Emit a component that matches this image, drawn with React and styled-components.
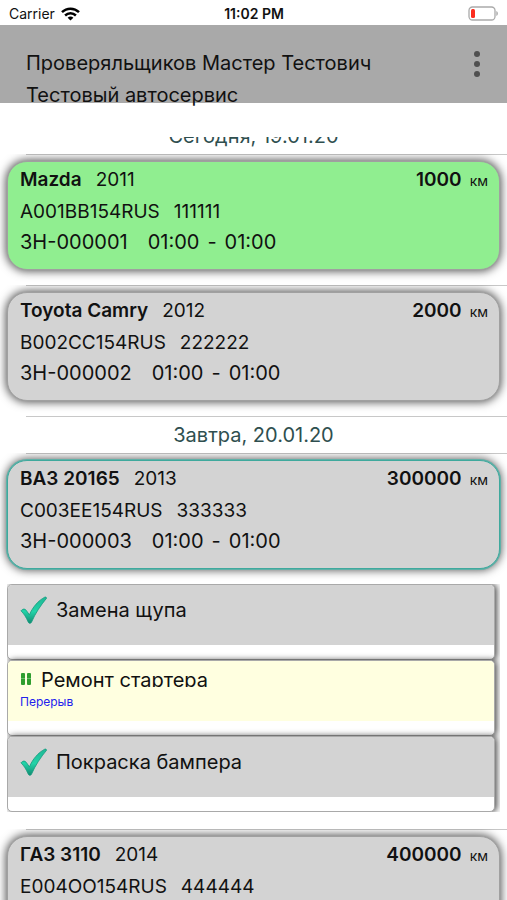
import React from 'react';
import styled, { createGlobalStyle } from 'styled-components';

const DAYS = [
    {
        title: 'Сегодня, 19.01.20',
        scrolled: true,
        orders: [
            { id: 1, car: 'Mazda', year: '2011', mileage: '1000', plate: 'A001BB154RUS', code: '111111', number: 'ЗН-000001', from: '01:00', to: '01:00', active: true },
            { id: 2, car: 'Toyota Camry', year: '2012', mileage: '2000', plate: 'B002CC154RUS', code: '222222', number: 'ЗН-000002', from: '01:00', to: '01:00' },
        ],
    },
    {
        title: 'Завтра, 20.01.20',
        orders: [
            {
                id: 3, car: 'ВАЗ 20165', year: '2013', mileage: '300000', plate: 'C003EE154RUS', code: '333333', number: 'ЗН-000003', from: '01:00', to: '01:00', selected: true,
                tasks: [
                    { name: 'Замена щупа', status: 'done' },
                    { name: 'Ремонт стартера', status: 'paused', note: 'Перерыв' },
                    { name: 'Покраска бампера', status: 'done' },
                ],
            },
            { id: 4, car: 'ГАЗ 3110', year: '2014', mileage: '400000', plate: 'E004OO154RUS', code: '444444' },
        ],
    },
];

const WifiIcon = () => (
    <svg width='19' height='14' viewBox='0 0 19 14' aria-hidden='true'>
        <g fill='none' stroke='#000' strokeWidth='2.5'>
            <path d='M1 5.2C5.8 0.5 13.2 0.5 18 5.2' />
            <path d='M4.1 8.5C7.2 5.6 11.8 5.6 14.9 8.5' />
        </g>
        <path d='M9.5 13.6L6.6 10.7C8.2 9.2 10.8 9.2 12.4 10.7Z' />
    </svg>
)

const BatteryIcon = () => (
    <svg width='31' height='15' viewBox='0 0 31 15' aria-hidden='true'>
        <rect x='1' y='1' width='26' height='13' rx='3.5' fill='#fff' stroke='#aaa' strokeWidth='1.3' />
        <rect x='3' y='3' width='4' height='9' rx='1.5' fill='#fb2c1e' />
        <path d='M28.3 5C30.4 5.8 30.4 9.2 28.3 10Z' fill='#aaa' />
    </svg>
)

const CheckIcon = () => (
    <svg width='27' height='28' viewBox='0 0 27 28' aria-hidden='true'>
        <defs>
            <linearGradient id='check' x1='0' y1='0' x2='0' y2='1'>
                <stop offset='0' stopColor='#1fb895' />
                <stop offset='0.55' stopColor='#22d3a8' />
                <stop offset='1' stopColor='#128a70' />
            </linearGradient>
        </defs>
        <path d='M1 14.8C2.8 12.6 5 12.6 6.4 14.6L9.4 18.8C12.6 11.4 18 4.6 24.8 1.2C25.6 0.8 26.6 1.4 26.6 2.2C20.4 9.6 15.2 17.6 11.6 26C10.8 27.8 9 27.8 8.2 26C6.2 21.4 4 17.8 1 14.8Z' fill='url(#check)' stroke='#159a7e' strokeWidth='0.8' />
    </svg>
)

const PauseIcon = () => (
    <svg width='12' height='12' viewBox='0 0 12 12' aria-hidden='true'>
        <rect x='1' y='0' width='4' height='12' rx='1' fill='#2f9e2f' />
        <rect x='7' y='0' width='4' height='12' rx='1' fill='#2f9e2f' />
        <rect x='1' y='5' width='4' height='1' fill='#6cbd6c' />
        <rect x='7' y='5' width='4' height='1' fill='#6cbd6c' />
    </svg>
)

const Order = ({ order }) => (
    <>
        <Item>
            <Divider />
            <Card $active={order.active} $selected={order.selected}>
                <Line>
                    <Strong>{order.car}</Strong>
                    <span>{order.year}</span>
                    <Mileage>
                        <Strong>{order.mileage}</Strong>
                        <Unit>км</Unit>
                    </Mileage>
                </Line>
                <Line>
                    <span>{order.plate}</span>
                    <span>{order.code}</span>
                </Line>
                {order.number && (
                    <Line $wide>
                        <span>{order.number}</span>
                        <Period>
                            <span>{order.from}</span>
                            <span>-</span>
                            <span>{order.to}</span>
                        </Period>
                    </Line>
                )}
            </Card>
        </Item>
        {order.tasks && (
            <Tasks>
                {order.tasks.map(task => (
                    <Task key={task.name}>
                        {task.status === 'done'
                            ?
                            <TaskBody>
                                <CheckIcon />
                                <span>{task.name}</span>
                            </TaskBody>
                            :
                            <PausedBody>
                                <PausedTitle>
                                    <PauseIcon />
                                    <span>{task.name}</span>
                                </PausedTitle>
                                <Note>{task.note}</Note>
                            </PausedBody>
                        }
                    </Task>
                ))}
            </Tasks>
        )}
    </>
)

const App = () => {
    return (
        <Screen>
            <GlobalStyle />
            <StatusBar>
                <Carrier>Carrier <WifiIcon /></Carrier>
                <Clock>11:02 PM</Clock>
                <Battery><BatteryIcon /></Battery>
            </StatusBar>
            <Header>
                <div>
                    <HeaderText>Проверяльщиков Мастер Тестович</HeaderText>
                    <HeaderText>Тестовый автосервис</HeaderText>
                </div>
                <MenuButton type='button' aria-label='Меню'>
                    <Dot />
                    <Dot />
                    <Dot />
                </MenuButton>
            </Header>
            <List>
                {DAYS.map(day => (
                    <section key={day.title}>
                        {!day.scrolled && <Divider />}
                        <DayTitle $scrolled={day.scrolled}>{day.title}</DayTitle>
                        {day.orders.map(order => <Order key={order.id} order={order} />)}
                    </section>
                ))}
            </List>
        </Screen>
    )
}

const GlobalStyle = createGlobalStyle`
    * {
        box-sizing: border-box;
    }

    body {
        margin: 0;
        background: #fff;
        color: #111;
        font-family: Inter, 'Liberation Sans', sans-serif;
        font-size: 20px;
    }
`

const Screen = styled.div`
    display: flex;
    flex-direction: column;
    height: 100vh;
    overflow: hidden;
`

const StatusBar = styled.div`
    display: grid;
    grid-template-columns: 1fr auto 1fr;
    align-items: center;
    flex: none;
    height: 25px;
    padding: 2px 8px 0 9px;
    font-size: 14px;
`

const Carrier = styled.div`
    display: flex;
    align-items: center;
    gap: 6px;
`

const Clock = styled.div`
    font-weight: 600;
`

const Battery = styled.div`
    display: flex;
    justify-content: flex-end;
`

const Header = styled.header`
    display: flex;
    justify-content: space-between;
    align-items: flex-start;
    flex: none;
    height: 78px;
    padding: 22px 20px 0 26px;
    margin-bottom: 34px;
    background: #a9a9a9;
`

const HeaderText = styled.div`
    line-height: 32px;
`

const MenuButton = styled.button`
    display: flex;
    flex-direction: column;
    align-items: center;
    gap: 4px;
    padding: 4px 7px;
    border: none;
    background: none;
`

const Dot = styled.span`
    width: 6px;
    height: 6px;
    border-radius: 50%;
    background: #505050;
`

const List = styled.main`
    flex: 1;
    min-height: 0;
    overflow-y: auto;
    scrollbar-width: none;
`

const DayTitle = styled.h2`
    display: flex;
    justify-content: center;
    align-items: flex-end;
    height: ${props => props.$scrolled ? '17px' : '36px'};
    margin: 0;
    overflow: hidden;
    color: #2f4f4f;
    font-size: 20px;
    font-weight: 400;
    line-height: 36px;
`

const Item = styled.div`
    padding-bottom: 15px;
    overflow: hidden;
`

const Divider = styled.hr`
    height: 1px;
    margin: 0 0 0 26px;
    border: none;
    background: #c8c8c8;
`

const Card = styled.article`
    min-height: 109px;
    margin: 6px 7px 0;
    padding: 2px 11px 2px 12px;
    border: 1px solid ${props => props.$selected ? '#3fa99d' : '#a0a0a0'};
    border-radius: 20px;
    background: ${props => props.$active ? '#90ee90' : '#d3d3d3'};
    box-shadow: ${props => props.$selected ? '0 0 0 1px #5fb0a7, ' : ''}0 0 10px 1px rgba(0, 0, 0, 0.7);
`

const Line = styled.div`
    display: flex;
    align-items: baseline;
    gap: ${props => props.$wide ? '20px' : '14px'};
    font-size: ${props => props.$wide ? '20px' : '19px'};
    line-height: 31px;
`

const Strong = styled.strong`
    font-weight: 600;
`

const Mileage = styled.span`
    display: flex;
    align-items: baseline;
    gap: 8px;
    margin-left: auto;
`

const Unit = styled.span`
    font-size: 14px;
`

const Period = styled.span`
    display: flex;
    gap: 8px;
`

const Tasks = styled.ul`
    margin: 0 7px 17px;
    padding: 0 5px 0 0;
    overflow: hidden;
    list-style: none;
`

const Task = styled.li`
    height: 76px;
    border: 1px solid #a9a9a9;
    border-radius: 5px;
    background: #fff;
    box-shadow: 2px 0 6px rgba(0, 0, 0, 0.7);
    overflow: hidden;
`

const TaskBody = styled.div`
    display: flex;
    align-items: center;
    gap: 9px;
    height: 60px;
    padding: 0 12px 10px;
    background: #d3d3d3;
`

const PausedBody = styled.div`
    height: 60px;
    padding: 6px 12px 0;
    background: #ffffe0;
`

const PausedTitle = styled.div`
    display: flex;
    align-items: flex-start;
    gap: 9px;
    height: 20px;
    overflow: hidden;

    svg {
        margin-top: 6px;
    }

    span {
        line-height: 26px;
    }
`

const Note = styled.div`
    color: #2222ee;
    font-size: 12px;
    line-height: 30px;
`

export default App;
